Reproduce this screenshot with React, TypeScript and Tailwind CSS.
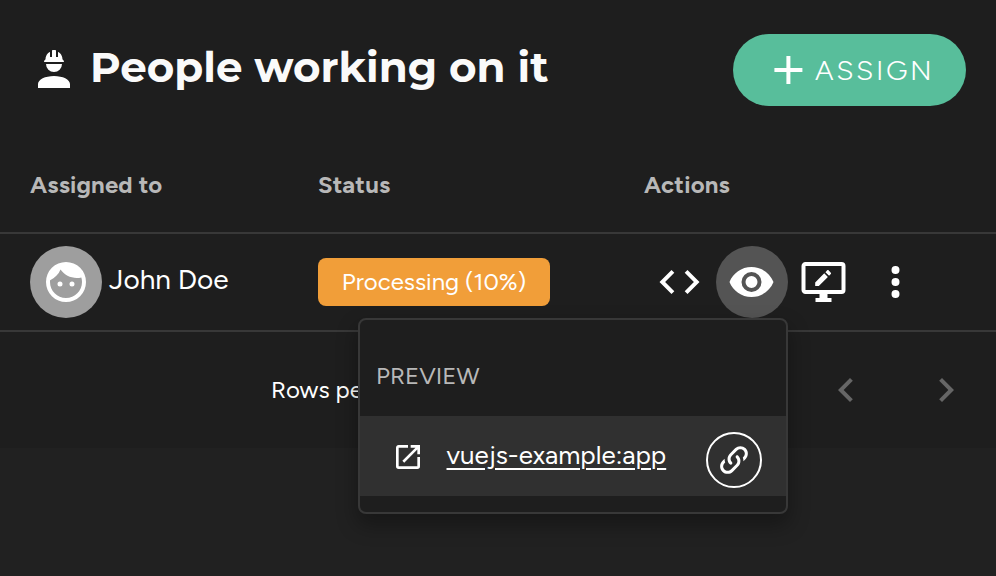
import type { ReactNode } from "react";

const icons = {
  worker:
    "M12,15C7.58,15 4,16.79 4,19V21H20V19C20,16.79 16.42,15 12,15M8,9A4,4 0 0,0 12,13A4,4 0 0,0 16,9M11.5,2C11.2,2 11,2.21 11,2.5V5.5H10V3C10,3 7.75,3.86 7.75,6.75C7.75,6.75 7,6.89 7,8H17C16.95,6.89 16.25,6.75 16.25,6.75C16.25,3.86 14,3 14,3V5.5H13V2.5C13,2.21 12.81,2 12.5,2H11.5Z",
  plus: "M19,13H13V19H11V13H5V11H11V5H13V11H19V13Z",
  face: "M9,11.75A1.25,1.25 0 0,0 7.75,13A1.25,1.25 0 0,0 9,14.25A1.25,1.25 0 0,0 10.25,13A1.25,1.25 0 0,0 9,11.75M15,11.75A1.25,1.25 0 0,0 13.75,13A1.25,1.25 0 0,0 15,14.25A1.25,1.25 0 0,0 16.25,13A1.25,1.25 0 0,0 15,11.75M12,2A10,10 0 0,0 2,12A10,10 0 0,0 12,22A10,10 0 0,0 22,12A10,10 0 0,0 12,2M12,20C7.59,20 4,16.41 4,12C4,11.71 4,11.42 4.05,11.14C6.41,10.09 8.28,8.16 9.26,5.77C11.07,8.33 14.05,10 17.42,10C18.2,10 18.95,9.91 19.67,9.74C19.88,10.45 20,11.21 20,12C20,16.41 16.41,20 12,20Z",
  code: "M14.6,16.6L19.2,12L14.6,7.4L16,6L22,12L16,18L14.6,16.6M9.4,16.6L4.8,12L9.4,7.4L8,6L2,12L8,18L9.4,16.6Z",
  eye: "M12,9A3,3 0 0,0 9,12A3,3 0 0,0 12,15A3,3 0 0,0 15,12A3,3 0 0,0 12,9M12,17A5,5 0 0,1 7,12A5,5 0 0,1 12,7A5,5 0 0,1 17,12A5,5 0 0,1 12,17M12,4.5C7,4.5 2.73,7.61 1,12C2.73,16.39 7,19.5 12,19.5C17,19.5 21.27,16.39 23,12C21.27,7.61 17,4.5 12,4.5Z",
  monitorEdit:
    "M21,16V4H3V16H21M21,2A2,2 0 0,1 23,4V16A2,2 0 0,1 21,18H14V20H16V22H8V20H10V18H3C1.89,18 1,17.1 1,16V4C1,2.89 1.89,2 3,2H21M7.84,12.2V14H9.66L14.2,9.46L12.38,7.64L7.84,12.2M15.66,8C15.86,7.8 15.86,7.5 15.66,7.32L14.53,6.18C14.34,6 14.04,6 13.85,6.18L12.96,7.07L14.78,8.89L15.66,8Z",
  dots: "M12,16A2,2 0 0,1 14,18A2,2 0 0,1 12,20A2,2 0 0,1 10,18A2,2 0 0,1 12,16M12,10A2,2 0 0,1 14,12A2,2 0 0,1 12,14A2,2 0 0,1 10,12A2,2 0 0,1 12,10M12,4A2,2 0 0,1 14,6A2,2 0 0,1 12,8A2,2 0 0,1 10,6A2,2 0 0,1 12,4Z",
  left: "M15.41,16.58L10.83,12L15.41,7.41L14,6L8,12L14,18L15.41,16.58Z",
  right: "M8.59,16.58L13.17,12L8.59,7.41L10,6L16,12L10,18L8.59,16.58Z",
  open: "M14,3V5H17.59L7.76,14.83L9.17,16.24L19,6.41V10H21V3M19,19H5V5H12V3H5C3.89,3 3,3.9 3,5V19A2,2 0 0,0 5,21H19A2,2 0 0,0 21,19V12H19V19Z",
  link: "M10.59,13.41C11,13.8 11,14.44 10.59,14.83C10.2,15.22 9.56,15.22 9.17,14.83C7.22,12.88 7.22,9.71 9.17,7.76V7.76L12.71,4.22C14.66,2.27 17.83,2.27 19.78,4.22C21.73,6.17 21.73,9.34 19.78,11.29L18.29,12.78C18.3,11.96 18.17,11.14 17.89,10.36L18.36,9.88C19.54,8.71 19.54,6.81 18.36,5.64C17.19,4.46 15.29,4.46 14.12,5.64L10.59,9.17C9.41,10.34 9.41,12.24 10.59,13.41M13.41,9.17C13.8,8.78 14.44,8.78 14.83,9.17C16.78,11.12 16.78,14.29 14.83,16.24V16.24L11.29,19.78C9.34,21.73 6.17,21.73 4.22,19.78C2.27,17.83 2.27,14.66 4.22,12.71L5.71,11.22C5.7,12.04 5.83,12.86 6.11,13.65L5.64,14.12C4.46,15.29 4.46,17.19 5.64,18.36C6.81,19.54 8.71,19.54 9.88,18.36L13.41,14.83C14.59,13.66 14.59,11.76 13.41,10.59C13,10.2 13,9.56 13.41,9.17Z",
};

function Icon({ name, className = "size-12" }: { name: keyof typeof icons; className?: string }) {
  return (
    <svg viewBox="0 0 24 24" fill="currentColor" className={`shrink-0 ${className}`} aria-hidden="true">
      <path d={icons[name]} />
    </svg>
  );
}

function IconButton({ label, className = "", children }: { label: string; className?: string; children: ReactNode }) {
  return (
    <button aria-label={label} className={`flex size-[72px] items-center justify-center rounded-full ${className}`}>
      {children}
    </button>
  );
}

function PreviewMenu() {
  return (
    <div className="absolute top-[318px] left-[358px] h-[196px] w-[430px] rounded-lg border-2 border-[#383838] bg-[#1e1e1e] pt-4 shadow-[0_10px_20px_2px_rgba(0,0,0,0.3)]">
      <div className="flex h-20 items-center px-4 text-2xl leading-none text-[#b8b8b8]">
        <span>PREVIEW</span>
      </div>
      <div className="flex h-20 items-center bg-[#303030] pl-8">
        <Icon name="open" className="mt-[2px] size-8" />
        <a className="mb-[2px] ml-[22.5px] w-[259.5px] text-[26px] leading-8 underline decoration-2 underline-offset-4">
          vuejs-example:app
        </a>
        <button aria-label="Copy link" className="mt-2 flex size-14 items-center justify-center rounded-full border-2 border-white">
          <Icon name="link" className="size-9" />
        </button>
      </div>
    </div>
  );
}

export default function App() {
  return (
    <div className="relative h-[576px] w-[996px] overflow-hidden bg-[#212121] font-['Figtree','Lato',sans-serif] text-white">
      <div className="h-[448px] bg-[#1e1e1e]">
        <header className="flex h-[140px] items-center justify-between px-[30px]">
          <div className="flex items-center gap-3">
            <Icon name="worker" />
            <h1 className="mb-[6px] font-['Montserrat','Inter',sans-serif] text-[42px] leading-[48px] font-bold whitespace-nowrap text-[#fafafa]">
              People working on it
            </h1>
          </div>
          <button className="flex h-[72px] w-[233px] items-center rounded-full bg-[#58be9b] pl-[31px]">
            <Icon name="plus" className="size-12 translate-x-[0.4px]" />
            <span className="ml-[3px] text-[28px] leading-none font-[350] tracking-[2.6px]">ASSIGN</span>
          </button>
        </header>

        <div className="grid h-[94px] grid-cols-[288px_326px_1fr] items-center border-b-2 border-[#383838] pb-[2px] pl-[30px] text-2xl font-bold tracking-[0.18px] text-[#b8b8b8]">
          <span>Assigned to</span>
          <span>Status</span>
          <span>Actions</span>
        </div>

        <div className="grid h-[98px] grid-cols-[288px_326px_1fr] items-center border-b-2 border-[#383838] pl-[30px]">
          <div className="flex items-center gap-[7px]">
            <div className="flex size-[72px] items-center justify-center rounded-full bg-[#9e9e9e]">
              <Icon name="face" />
            </div>
            <span className="mb-[6px] text-[28px] leading-9">John Doe</span>
          </div>
          <span className="flex h-12 w-[232px] items-center justify-center rounded-lg bg-[#f19e39] text-2xl">
            Processing (10%)
          </span>
          <div className="flex">
            <IconButton label="Code"><Icon name="code" className="size-12 -translate-x-[0.5px]" /></IconButton>
            <IconButton label="Preview" className="bg-[#545454]"><Icon name="eye" className="size-12 -translate-x-[0.5px]" /></IconButton>
            <IconButton label="Remote edit"><Icon name="monitorEdit" className="size-12 -translate-x-[0.5px]" /></IconButton>
            <IconButton label="More"><Icon name="dots" className="size-12 -translate-x-[0.5px]" /></IconButton>
          </div>
        </div>

        <footer className="flex h-[116px] items-center pl-[271px] text-2xl">
          <span className="w-[551px] whitespace-nowrap">Rows per page:</span>
          <div className="flex gap-[52px] text-[#666]">
            <Icon name="left" />
            <Icon name="right" />
          </div>
        </footer>
      </div>
      <PreviewMenu />
    </div>
  );
}
